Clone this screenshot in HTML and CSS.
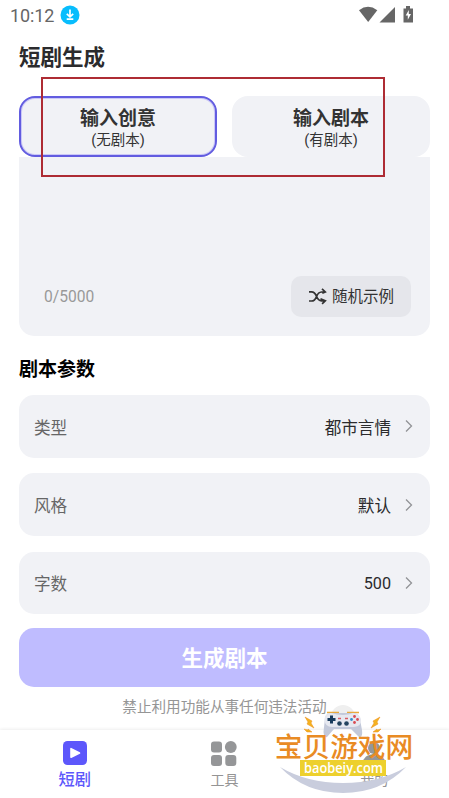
FILE: index.html
```html
<!DOCTYPE html>
<html lang="zh-CN">
<head>
<meta charset="utf-8">
<title>短剧生成</title>
<link rel="stylesheet" href="styles.css">
</head>
<body>
<div class="screen">
  <header class="status">
    <span class="time">10:12</span>
    <svg class="download" width="20" height="20" viewBox="0 0 20 20"><circle cx="10" cy="10" r="9.5" fill="#08bdfd"/><path d="M10 4.5v7M6.800 8.800l3.200 3.100 3.200-3.100M6.700 14.200h6.600" fill="none" stroke="#fff" stroke-width="1.700"/></svg>
    <svg class="signals" width="56" height="18" viewBox="0 0 56 18" fill="#666"><path d="M0 4.300Q9-2.600 18.300 4.300L9.200 16z"/><path d="M20.500 16.500L36 1v15.500z"/><path d="M44.500 2.500h2.500V0h4v2.500H54V16.500H44.500z"/><path d="M49.800 4l-3.100 5.500h2.100v4.300l3.200-5.800h-2.200z" fill="#fff"/></svg>
  </header>
  <main class="content">
    <h1>短剧生成</h1>
    <div class="tabs">
      <div class="tab active"><b>输入创意</b><span>(无剧本)</span></div>
      <div class="tab"><b>输入剧本</b><span>(有剧本)</span></div>
    </div>
    <section class="editor">
      <span class="count">0/5000</span>
      <button class="random"><svg width="19" height="17" viewBox="0 0 19 17" fill="none" stroke="#333" stroke-width="1.700"><path d="M1 3.800h2.500C10 4 7 12.500 13.500 12.800h3.800M1 13h2.500C10 13 7 4.300 13.500 4h3.800M14 .9l3.300 3.100-3 1.300M12.500 10.800l4.800 2-3.200 3"/></svg><span>随机示例</span></button>
    </section>
    <h2>剧本参数</h2>
    <div class="rows">
      <div class="row"><span class="label">类型</span><span>都市言情</span><svg class="chevron" viewBox="0 0 8 14"><path d="M1 1.500l5.500 5.500-5.500 5.500"/></svg></div>
      <div class="row"><span class="label">风格</span><span>默认</span><svg class="chevron" viewBox="0 0 8 14"><path d="M1 1.500l5.500 5.500-5.500 5.500"/></svg></div>
      <div class="row"><span class="label">字数</span><span class="number">500</span><svg class="chevron" viewBox="0 0 8 14"><path d="M1 1.500l5.500 5.500-5.500 5.500"/></svg></div>
    </div>
    <button class="generate">生成剧本</button>
    <p class="notice">禁止利用功能从事任何违法活动</p>
  </main>
  <nav class="nav">
    <div class="item current"><svg width="26" height="26" viewBox="0 0 26 26"><rect x="1" y="1" width="24" height="24" rx="4.500" fill="#5d57fb"/><path d="M9 8.700v8.600l8.500-4.300z" fill="#fff" stroke="#fff" stroke-width="1.600" stroke-linejoin="round"/></svg><span>短剧</span></div>
    <div class="item"><svg width="26" height="26" viewBox="0 0 26 26" fill="#959698"><rect y="1.500" width="11" height="11" rx="3"/><circle cx="19.800" cy="7" r="5.900"/><rect y="15" width="11" height="11" rx="3"/><rect x="14.300" y="15" width="11" height="11" rx="3"/></svg><span>工具</span></div>
    <div class="item"><svg width="26" height="26" viewBox="0 0 26 26" fill="#959698"><circle cx="13" cy="8" r="6"/><path d="M1 24Q3 14 13 14t12 10z"/></svg><span>我的</span></div>
  </nav>
  <div class="highlight"></div>
  <svg class="watermark" viewBox="0 0 160 103">
    <circle cx="78" cy="22" r="12" fill="#efefef"/>
    <path d="M15 72Q42 88 78 88T141 72Q116 98 78 98T15 72z" fill="#c9cddd"/>
    <g fill="#f4b21f" stroke="#ed8e20" stroke-width=".5"><path d="M40 22l7 4-1 2 3 5-7-4 1-2zM39 34l4 1v-1l4 3-5 0zM115 22l-7 4 1 2-3 5 7-4-1-2zM116 34l-4 1v-1l-4 3 5 0z"/></g>
    <path d="M62 17.500h12M82 17.500h12" stroke="#e9a93b" stroke-width="1.500"/>
    <path d="M66 18Q61 18 60 23L58.500 37Q59 43 62 42L69 34H86L94 42Q98 43 97 35L94.500 22Q93 18 88 18z" fill="#c3c9da"/>
    <path d="M66 18Q59 19 59.500 25 60 32 67 32H89Q97 31 96 24 94 18 88 18 84 20 78 20T66 18z" fill="#e6e8f0"/>
    <path d="M66.500 20.500v8M62.500 24.500h8" stroke="#183b5c" stroke-width="3"/>
    <circle cx="74.500" cy="28.500" r="2.300" fill="#23435f"/><circle cx="81.500" cy="28.500" r="2.300" fill="#23435f"/>
    <path d="M73 23.500h3M80 23.500h3" stroke="#d85b63" stroke-width="1.300"/>
    <circle cx="89.500" cy="21.500" r="1.400" fill="#d94a52"/><circle cx="89.500" cy="27.500" r="1.400" fill="#d94a52"/><circle cx="86.500" cy="24.500" r="1.400" fill="#318ecb"/><circle cx="92.500" cy="24.500" r="1.400" fill="#d94a52"/>
    <text class="brand" x="79" y="61.500" text-anchor="middle">宝贝游戏网</text>
    <rect x="35" y="65" width="86" height="16" fill="#edd02d"/>
    <text class="domain" x="78.500" y="77.500" text-anchor="middle" textLength="79" lengthAdjust="spacingAndGlyphs">baobeiy.com</text>
  </svg>
</div>
</body>
</html>
```
FILE: styles.css
```css
* { box-sizing: border-box; }
body { margin: 0; background: #fff; color: #2b2b2d; font-family: Roboto, "Noto Sans CJK SC", sans-serif; }
button { border: 0; font: inherit; padding: 0; }
.screen { position: relative; width: 449px; height: 798px; overflow: hidden; display: flex; flex-direction: column; }
.status { height: 30px; flex: none; display: flex; align-items: center; padding: 0 34px 0 10px; }
.time { font-size: 18px; color: #666; letter-spacing: -.1px; }
.download { margin-left: 6px; }
.signals { margin-left: auto; }
.content { padding: 0 19px; height: 700px; flex: none; }
h1 { margin: 9px 0 0; height: 38px; line-height: 38px; font-size: 21.500px; }
.tabs { display: grid; grid-template-columns: 198px 198px; gap: 15px; margin-top: 19px; }
.tab { height: 61px; background: #f1f2f6; border: 2.500px solid #f1f2f6; border-radius: 16px; display: flex; flex-direction: column; align-items: center; padding-top: 9px; color: #333; }
.tab.active { border-color: #625ce0; box-shadow: inset 0 0 0 1px #cbc8f7; }
.tab b { font-size: 19px; line-height: 23px; }
.tab span { font-size: 14.500px; line-height: 21px; }
.editor { height: 179px; background: #f1f2f6; border-radius: 0 0 15px 15px; display: flex; align-items: flex-end; justify-content: space-between; padding: 0 19px 19px 25px; }
.count { color: #999; font-size: 15.600px; line-height: 39px; }
.random { width: 120px; height: 41px; border-radius: 10px; background: #e5e6eb; color: #333; font-size: 15.500px; display: flex; align-items: center; justify-content: center; gap: 5px; }
.random span { line-height: 20px; }
h2 { margin: 19px 0 11px; height: 29px; line-height: 29px; font-size: 19px; color: #000; }
.rows { display: flex; flex-direction: column; gap: 15.700px; }
.row { height: 62.600px; background: #f1f2f6; border-radius: 15px; display: flex; align-items: center; padding: 0 17px 0 15px; font-size: 16.600px; }
.row span { padding-top: 1px; }
.row .number { font-size: 16.200px; padding-top: 2px; }
.label { color: #666; margin-right: auto; }
.chevron { width: 8px; height: 14px; margin-left: 14px; fill: none; stroke: #929397; stroke-width: 1.300; }
.generate { width: 100%; height: 59px; margin-top: 14px; border-radius: 15px; background: #bfbcff; color: #fff; font-size: 21.500px; font-weight: 700; display: flex; align-items: center; justify-content: center; padding-bottom: 2px; }
.notice { margin: 9px 0 0; text-align: center; font-size: 14.600px; line-height: 22px; color: #959595; }
.nav { height: 68px; flex: none; display: grid; grid-template-columns: repeat(3, 1fr); box-shadow: 0 -1px 3px #eee; background: #fff; padding-top: 10px; }
.item { display: flex; flex-direction: column; align-items: center; font-size: 14px; color: #949494; }
.item span { line-height: 24px; margin-top: 2px; }
.item.current { color: #5d57fb; font-size: 16.300px; font-weight: 500; }
.highlight { position: absolute; left: 41px; top: 77px; width: 344px; height: 100px; border: 2px solid #ae2c34; }
.watermark { position: absolute; left: 265px; top: 695px; width: 160px; height: 103px; }
.brand { font: 500 27.700px "Noto Sans CJK SC", sans-serif; fill: #e98b24; }
.domain { font: 600 15px "Open Sans", sans-serif; fill: #fff; }
```
